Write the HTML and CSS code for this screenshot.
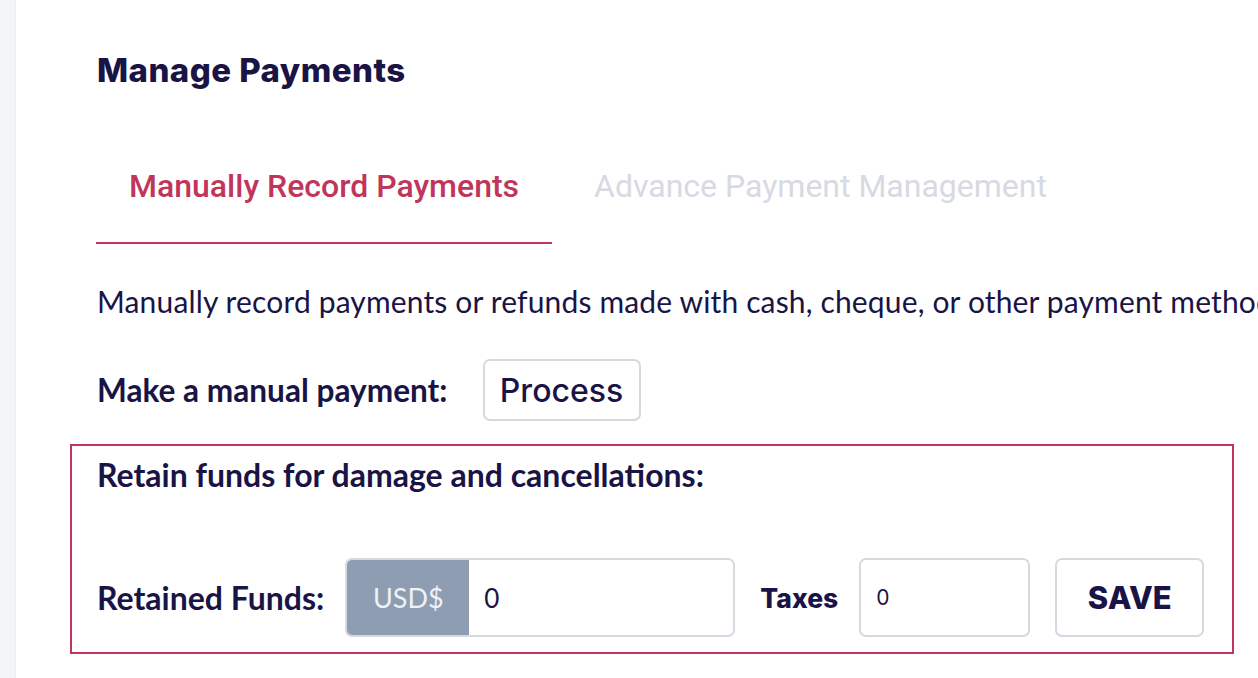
FILE: index.html
```html
<!DOCTYPE html>
<html>
<head>
<meta charset="utf-8">
<link rel="stylesheet" href="styles.css">
</head>
<body>
<div class="page">
  <aside class="rail"></aside>
  <main class="content">
    <h1 class="title">Manage Payments</h1>
    <nav class="tabs">
      <div class="tab tab-active">Manually Record Payments</div>
      <div class="tab">Advance Payment Management</div>
    </nav>
    <p class="desc">Manually record payments or refunds made with cash, cheque, or other payment methods.</p>
    <div class="manual-row">
      <span class="label">Make a manual payment:</span>
      <button class="btn btn-process">Process</button>
    </div>
    <section class="retain">
      <div class="label retain-title">Retain funds for damage and cancellations:</div>
      <div class="retain-row">
        <span class="label">Retained Funds:</span>
        <div class="input-group">
          <span class="addon">USD$</span>
          <span class="group-value">0</span>
        </div>
        <span class="label taxes-label">Taxes</span>
        <div class="taxes-input">0</div>
        <button class="btn btn-save">SAVE</button>
      </div>
    </section>
  </main>
</div>
</body>
</html>
```

FILE: styles.css
```css
html, body {
  margin: 0;
  padding: 0;
  background: #ffffff;
  overflow: hidden;
}
.page {
  display: flex;
  width: 1258px;
  height: 678px;
}
.rail {
  width: 15px;
  flex: 0 0 15px;
  background: #f4f5f9;
  border-right: 1px solid #eceef3;
}
.content {
  flex: 1;
  padding-left: 81px;
  padding-top: 50px;
  min-width: 0;
  white-space: nowrap;
}
.title {
  margin: 0;
  font-family: "Inter", "Noto Sans", sans-serif;
  font-weight: 800;
  font-size: 33px;
  line-height: 40px;
  color: #1a1446;
  letter-spacing: 0.45px;
}
.tabs {
  display: flex;
  margin-top: 60px;
  margin-left: -1px;
}
.tab {
  font-family: "Roboto", sans-serif;
  font-size: 32px;
  line-height: 36px;
  padding: 18px 33px 38px 33px;
  color: #d8d9e2;
  border-bottom: 2px solid transparent;
}
.tab-active {
  font-weight: 500;
  color: #c0365a;
  border-bottom-color: #c0365a;
  margin-right: 9px;
}
.desc {
  margin: 39px 0 0 0;
  font-family: "Lato", "Open Sans", sans-serif;
  font-size: 30px;
  letter-spacing: 0.15px;
  line-height: 36px;
  color: #1a1446;
}
.label {
  font-family: "Lato", "Open Sans", sans-serif;
  font-weight: 700;
  font-size: 32px;
  line-height: 38px;
  color: #1a1446;
}
.manual-row {
  display: flex;
  align-items: center;
  gap: 35px;
  margin-top: 40px;
}
.manual-row .label {
  font-size: 31.6px;
}
.btn {
  background: #ffffff;
  border: 2px solid #d5d9e0;
  border-radius: 7px;
  color: #1a1446;
  font-family: "Inter", sans-serif;
  cursor: pointer;
  padding: 0;
}
.btn-process {
  height: 62px;
  width: 158px;
  font-size: 32px;
  font-weight: 500;
}
.retain {
  margin: 23px 0 0 -27px;
  width: 1164px;
  height: 210px;
  box-sizing: border-box;
  border: 2px solid #c0365a;
  padding: 10px 0 0 25px;
}
.retain-row {
  display: flex;
  align-items: center;
  margin-top: 64px;
}
.input-group {
  display: flex;
  margin-left: 21px;
  width: 390px;
  height: 79px;
  box-sizing: border-box;
  border: 2px solid #d5d9e0;
  border-radius: 7px;
  overflow: hidden;
}
.addon {
  width: 122px;
  background: #8e9db2;
  color: #eef1f6;
  font-family: "Lato", "Open Sans", sans-serif;
  font-size: 27px;
  display: flex;
  align-items: center;
  justify-content: center;
}
.group-value {
  display: flex;
  align-items: center;
  padding-left: 15px;
  font-family: "Lato", "Open Sans", sans-serif;
  font-size: 26px;
  color: #1a1446;
}
.taxes-label {
  font-family: "Inter", sans-serif;
  font-weight: 800;
  font-size: 26.5px;
  margin-left: 25px;
}
.taxes-input {
  margin-left: 21px;
  width: 171px;
  height: 79px;
  box-sizing: border-box;
  border: 2px solid #d5d9e0;
  border-radius: 7px;
  display: flex;
  align-items: center;
  padding-left: 15px;
  font-family: "Inter", sans-serif;
  font-size: 21px;
  color: #1a1446;
}
.btn-save {
  margin-left: 25px;
  width: 149px;
  height: 79px;
  font-size: 31px;
  font-weight: 800;
}
```
